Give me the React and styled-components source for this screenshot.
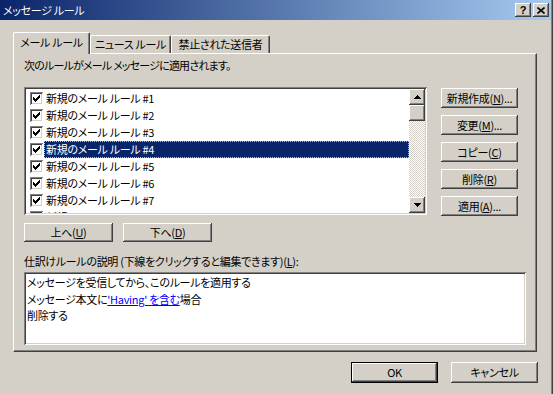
import React from "react";
import styled, { createGlobalStyle } from "styled-components";

const FACE = "#D4D0C8";
const raised = `inset -1px -1px #404040, inset 1px 1px #ffffff, inset -2px -2px #808080, inset 2px 2px ${FACE}`;
const sunken = `inset 1px 1px #808080, inset -1px -1px #ffffff, inset 2px 2px #404040, inset -2px -2px ${FACE}`;

const GlobalStyle = createGlobalStyle`
  html, body {
    margin: 0;
    padding: 0;
    background: ${FACE};
  }
  body {
    font-family: "Noto Sans CJK JP", "Noto Sans", sans-serif;
    font-size: 11px;
    letter-spacing: -0.3px;
    color: #000;
    font-feature-settings: "palt";
  }
`;

const Window = styled.div`
  width: 553px;
  height: 394px;
  box-sizing: border-box;
  padding-right: 2px;
  background: ${FACE};
  box-shadow: inset -1px 0 #404040, inset -2px 0 #808080;
  overflow: hidden;
  display: flex;
  flex-direction: column;
`;

const TitleBar = styled.div`
  height: 20px;
  flex: none;
  display: flex;
  align-items: center;
  justify-content: space-between;
  padding: 0 2px 0 3px;
  background: linear-gradient(to right, #0a246a, #a6caf0);
`;

const Title = styled.span`
  color: #fff;
  line-height: 20px;
`;

const CaptionButtons = styled.div`
  display: flex;
  gap: 2px;
`;

const CaptionButton = styled.div`
  width: 16px;
  height: 14px;
  box-sizing: border-box;
  background: ${FACE};
  box-shadow: ${raised};
  display: flex;
  align-items: center;
  justify-content: center;
  font-family: "Liberation Sans", sans-serif;
  font-weight: bold;
  font-size: 11px;
  line-height: 14px;
`;

const Body = styled.div`
  padding-top: 12px;
  display: flex;
  flex-direction: column;
`;

const TabStrip = styled.div`
  display: flex;
  align-items: flex-end;
  height: 22px;
  margin-left: 13px;
  margin-bottom: -1px;
  position: relative;
  z-index: 1;
`;

const Tab = styled.div`
  box-sizing: border-box;
  width: ${(p) => p.$w}px;
  height: ${(p) => (p.$active ? 22 : 18)}px;
  margin-bottom: ${(p) => (p.$active ? 0 : 1)}px;
  padding-top: ${(p) => (p.$active ? 2 : 1)}px;
  background: ${FACE};
  border-left: 1px solid #fff;
  border-top: 1px solid #fff;
  border-right: 1px solid #404040;
  border-radius: 2px 2px 0 0;
  box-shadow: inset -1px 0 #808080;
  text-align: center;
  line-height: 15px;
  white-space: nowrap;
`;

const Panel = styled.div`
  margin-left: 13px;
  width: 524px;
  height: 299px;
  box-sizing: border-box;
  border-top: 1px solid #fff;
  border-left: 1px solid #fff;
  border-right: 1px solid #404040;
  border-bottom: 1px solid #404040;
  box-shadow: inset -1px -1px #808080;
  padding: 4px 10px 0 10px;
  display: flex;
  flex-direction: column;
`;

const Caption = styled.div`
  line-height: 15px;
  height: 15px;
  margin-top: ${(p) => p.$mt || 0}px;
  white-space: nowrap;
  letter-spacing: ${(p) => p.$tight ? "-0.8px" : "-0.3px"};
`;

const ListRow = styled.div`
  display: flex;
  gap: 14px;
  margin-top: 14px;
`;

const ListBox = styled.div`
  width: 403px;
  height: 128px;
  box-sizing: border-box;
  padding: 2px;
  background: #fff;
  box-shadow: ${sunken};
  display: flex;
  overflow: hidden;
`;

const Items = styled.div`
  flex: 1;
  padding-top: 1px;
  overflow: hidden;
`;

const Item = styled.div`
  height: 17px;
  display: flex;
  align-items: center;
  padding-left: 4px;
`;

const CheckBox = styled.div`
  width: 13px;
  height: 13px;
  flex: none;
  box-sizing: border-box;
  background: #fff;
  box-shadow: ${sunken};
  display: flex;
  align-items: center;
  justify-content: center;
`;

const ItemLabel = styled.div`
  flex: 1;
  margin-left: 1px;
  height: 17px;
  box-sizing: border-box;
  padding-left: 1px;
  line-height: 15px;
  white-space: nowrap;
  border: 1px ${(p) => (p.$selected ? "dotted #e8c050" : "solid transparent")};
  background: ${(p) => (p.$selected ? "#0a246a" : "transparent")};
  color: ${(p) => (p.$selected ? "#fff" : "#000")};
`;

const ScrollBar = styled.div`
  width: 16px;
  flex: none;
  display: flex;
  flex-direction: column;
`;

const ScrollButton = styled.div`
  width: 16px;
  height: 16px;
  flex: none;
  box-sizing: border-box;
  background: ${FACE};
  box-shadow: ${raised};
  display: flex;
  align-items: center;
  justify-content: center;
`;

const Track = styled.div`
  flex: 1;
  background: repeating-conic-gradient(#ffffff 0 25%, ${FACE} 0 50%) 0 0 / 2px 2px;
`;

const SideButtons = styled.div`
  display: flex;
  flex-direction: column;
  gap: 7px;
  margin-top: 1px;
`;

const Button = styled.button`
  width: ${(p) => p.$w}px;
  height: ${(p) => p.$h}px;
  box-sizing: border-box;
  padding: 0;
  margin: 0;
  border: none;
  background: ${FACE};
  box-shadow: ${(p) =>
    p.$default
      ? `inset 0 0 0 1px #000, inset -2px -2px #404040, inset 2px 2px #ffffff, inset -3px -3px #808080, inset 3px 3px ${FACE}`
      : raised};
  font-family: inherit;
  font-size: 11px;
  letter-spacing: -0.3px;
  font-feature-settings: "palt";
  color: #000;
  line-height: 15px;
  display: flex;
  align-items: center;
  justify-content: center;
  white-space: nowrap;
`;

const MoveRow = styled.div`
  display: flex;
  gap: 10px;
  margin-top: 7px;
`;

const DescBox = styled.div`
  width: 502px;
  height: 73px;
  margin-top: 3px;
  box-sizing: border-box;
  padding: 2px 3px;
  background: #fff;
  box-shadow: ${sunken};
`;

const DescLine = styled.div`
  color: #000;
  line-height: 16.5px;
  white-space: nowrap;
`;

const Link = styled.span`
  color: #0000ff;
  text-decoration: underline;
`;

const Footer = styled.div`
  display: flex;
  justify-content: flex-end;
  gap: 13px;
  margin-top: 10px;
  padding-right: 13px;
`;

const Check = () => (
  <svg width="7" height="7" viewBox="0 0 7 7" shapeRendering="crispEdges">
    {[2, 3, 4, 3, 2, 1, 0].map((y, x) => (
      <rect key={x} x={x} y={y} width="1" height="3" fill="#000" />
    ))}
  </svg>
);

const Arrow = ({ down }) => (
  <svg width="7" height="4" viewBox="0 0 7 4" shapeRendering="crispEdges">
    {[0, 1, 2, 3].map((i) => (
      <rect
        key={i}
        x={3 - i}
        y={down ? 3 - i : i}
        width={i * 2 + 1}
        height="1"
        fill="#000"
      />
    ))}
  </svg>
);

const CloseGlyph = () => (
  <svg width="8" height="7" viewBox="0 0 8 7">
    <path d="M0.5 0.5 L7.5 6.5 M7.5 0.5 L0.5 6.5" stroke="#000" strokeWidth="1.6" />
  </svg>
);

const rules = [1, 2, 3, 4, 5, 6, 7, 8];

export default function App() {
  return (
    <Window>
      <GlobalStyle />
      <TitleBar>
        <Title>メッセージ ルール</Title>
        <CaptionButtons>
          <CaptionButton>?</CaptionButton>
          <CaptionButton>
            <CloseGlyph />
          </CaptionButton>
        </CaptionButtons>
      </TitleBar>
      <Body>
        <TabStrip>
          <Tab $active $w={77}>メール ルール</Tab>
          <Tab $w={81}>ニュース ルール</Tab>
          <Tab $w={99}>禁止された送信者</Tab>
        </TabStrip>
        <Panel>
          <Caption $tight>次のルールがメール メッセージに適用されます。</Caption>
          <ListRow>
            <ListBox>
              <Items>
                {rules.map((n) => (
                  <Item key={n}>
                    <CheckBox>
                      <Check />
                    </CheckBox>
                    <ItemLabel $selected={n === 4}>新規のメール ルール #{n}</ItemLabel>
                  </Item>
                ))}
              </Items>
              <ScrollBar>
                <ScrollButton>
                  <Arrow />
                </ScrollButton>
                <ScrollButton />
                <Track />
                <ScrollButton>
                  <Arrow down />
                </ScrollButton>
              </ScrollBar>
            </ListBox>
            <SideButtons>
              <Button $w={77} $h={20}>新規作成(<u>N</u>)...</Button>
              <Button $w={77} $h={20}>変更(<u>M</u>)...</Button>
              <Button $w={77} $h={20}>コピー(<u>C</u>)</Button>
              <Button $w={77} $h={20}>削除(<u>R</u>)</Button>
              <Button $w={77} $h={20}>適用(<u>A</u>)...</Button>
            </SideButtons>
          </ListRow>
          <MoveRow>
            <Button $w={89} $h={19}>上へ(<u>U</u>)</Button>
            <Button $w={89} $h={19}>下へ(<u>D</u>)</Button>
          </MoveRow>
          <Caption $mt={12}>
            仕訳けルールの説明 (下線をクリックすると編集できます)(<u>L</u>):
          </Caption>
          <DescBox>
            <DescLine>メッセージを受信してから、このルールを適用する</DescLine>
            <DescLine>
              メッセージ本文に<Link>'Having' を含む</Link>場合
            </DescLine>
            <DescLine>削除する</DescLine>
          </DescBox>
        </Panel>
        <Footer>
          <Button $default $w={87} $h={21}>OK</Button>
          <Button $w={87} $h={21}>キャンセル</Button>
        </Footer>
      </Body>
    </Window>
  );
}
